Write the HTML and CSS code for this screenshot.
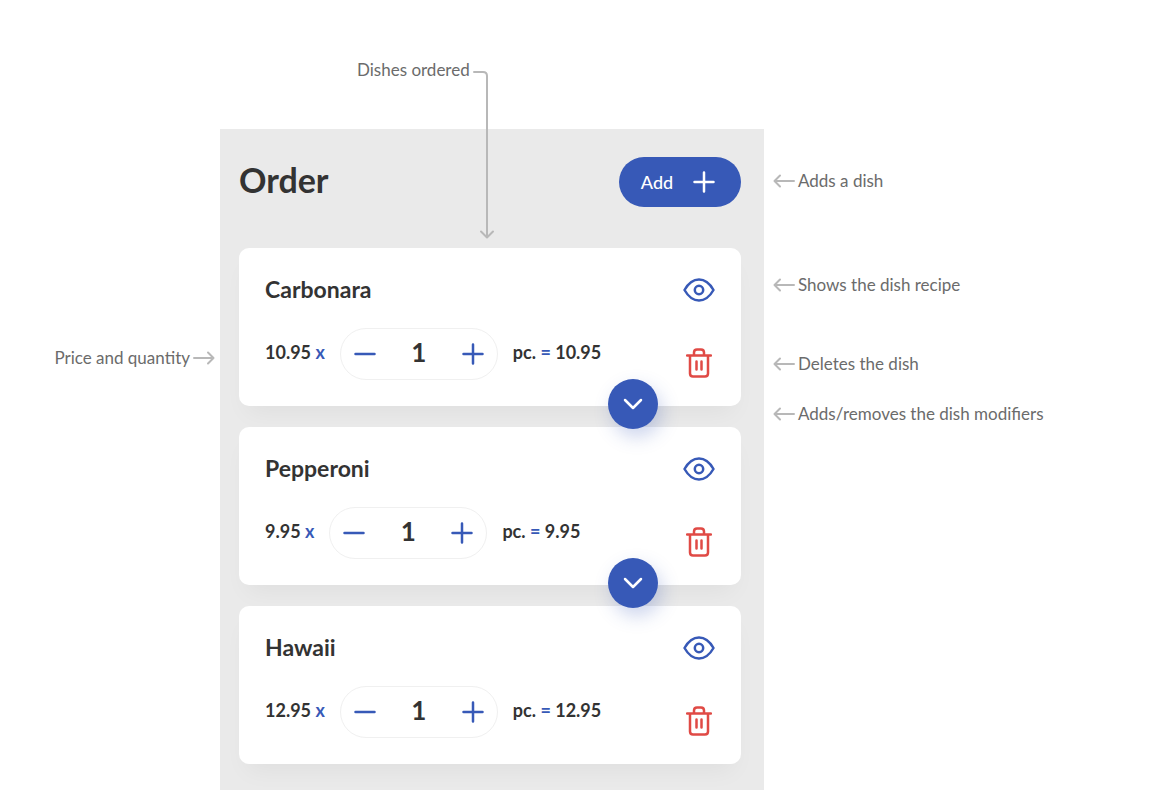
FILE: index.html
```html
<!DOCTYPE html>
<html lang="en">
<head>
  <meta charset="UTF-8" />
  <meta name="viewport" content="width=device-width, initial-scale=1.0" />
  <title>Order</title>
  <link rel="stylesheet" href="styles.css">
</head>
<body>
  <!-- Shared icons -->
  <svg class="sprite" aria-hidden="true">
    <symbol id="arrow-left" viewBox="0 0 22 14">
      <path d="M21 7H1.5M7 1.5L1.5 7L7 12.5" />
    </symbol>
    <symbol id="arrow-right" viewBox="0 0 22 14">
      <path d="M1 7h19.5M15 1.5L20.5 7L15 12.5" />
    </symbol>
    <symbol id="plus" viewBox="0 0 22 22">
      <path d="M1.5 11h19M11 1.5v19" />
    </symbol>
    <symbol id="minus" viewBox="0 0 22 22">
      <path d="M1.5 11h19" />
    </symbol>
    <symbol id="chevron" viewBox="0 0 20 12">
      <path d="M2 2l8 8l8-8" />
    </symbol>
    <symbol id="eye" viewBox="0 0 32 24">
      <path d="M1.5 12C5.5 5 10.5 1.5 16 1.5S26.5 5 30.5 12C26.5 19 21.5 22.5 16 22.5S5.5 19 1.5 12Z" />
      <circle cx="16" cy="12" r="4.2" />
    </symbol>
    <symbol id="trash" viewBox="0 0 26 30">
      <path d="M1 7.5h24M4 7.5V25.5Q4 28.5 7 28.5H19Q22 28.5 22 25.5V7.5M8 7V4.5Q8 1.5 11 1.5H15Q18 1.5 18 4.5V7M10.5 13.5v8M15.5 13.5v8" />
    </symbol>
  </svg>

  <main class="guide">
    <p class="note note-top">
      <span class="note-label">Dishes ordered
        <svg class="connector" viewBox="0 0 22 172" aria-hidden="true">
          <path d="M1 4h9q4 0 4 4v161M8 163.5l6 6l6-6" />
        </svg>
      </span>
    </p>

    <p class="note note-left">
      Price and quantity
      <svg class="arrow" aria-hidden="true"><use href="#arrow-right" /></svg>
    </p>

    <section class="order">
      <header class="order-header">
        <h1>Order</h1>
        <button class="add" type="button">Add <svg class="icon-plus" aria-hidden="true"><use href="#plus" /></svg></button>
      </header>

      <article class="dish">
        <div class="dish-main">
          <h2>Carbonara</h2>
          <div class="dish-price">
            <span class="amount">10.95 <span class="sign">x</span></span>
            <div class="quantity">
              <button type="button" aria-label="Less"><svg class="icon-plus"><use href="#minus" /></svg></button>
              <input type="text" value="1" aria-label="Carbonara quantity" />
              <button type="button" aria-label="More"><svg class="icon-plus"><use href="#plus" /></svg></button>
            </div>
            <span class="amount">pc. <span class="sign">=</span> 10.95</span>
          </div>
        </div>
        <div class="dish-actions">
          <button class="show" type="button" aria-label="Show recipe"><svg class="icon-eye"><use href="#eye" /></svg></button>
          <button class="delete" type="button" aria-label="Delete"><svg class="icon-trash"><use href="#trash" /></svg></button>
        </div>
        <button class="expand" type="button" aria-label="Modifiers"><svg class="icon-chevron"><use href="#chevron" /></svg></button>
      </article>

      <article class="dish">
        <div class="dish-main">
          <h2>Pepperoni</h2>
          <div class="dish-price">
            <span class="amount">9.95 <span class="sign">x</span></span>
            <div class="quantity">
              <button type="button" aria-label="Less"><svg class="icon-plus"><use href="#minus" /></svg></button>
              <input type="text" value="1" aria-label="Pepperoni quantity" />
              <button type="button" aria-label="More"><svg class="icon-plus"><use href="#plus" /></svg></button>
            </div>
            <span class="amount">pc. <span class="sign">=</span> 9.95</span>
          </div>
        </div>
        <div class="dish-actions">
          <button class="show" type="button" aria-label="Show recipe"><svg class="icon-eye"><use href="#eye" /></svg></button>
          <button class="delete" type="button" aria-label="Delete"><svg class="icon-trash"><use href="#trash" /></svg></button>
        </div>
        <button class="expand" type="button" aria-label="Modifiers"><svg class="icon-chevron"><use href="#chevron" /></svg></button>
      </article>

      <article class="dish">
        <div class="dish-main">
          <h2>Hawaii</h2>
          <div class="dish-price">
            <span class="amount">12.95 <span class="sign">x</span></span>
            <div class="quantity">
              <button type="button" aria-label="Less"><svg class="icon-plus"><use href="#minus" /></svg></button>
              <input type="text" value="1" aria-label="Hawaii quantity" />
              <button type="button" aria-label="More"><svg class="icon-plus"><use href="#plus" /></svg></button>
            </div>
            <span class="amount">pc. <span class="sign">=</span> 12.95</span>
          </div>
        </div>
        <div class="dish-actions">
          <button class="show" type="button" aria-label="Show recipe"><svg class="icon-eye"><use href="#eye" /></svg></button>
          <button class="delete" type="button" aria-label="Delete"><svg class="icon-trash"><use href="#trash" /></svg></button>
        </div>
      </article>
    </section>

    <ul class="notes-right">
      <li class="note"><svg class="arrow" aria-hidden="true"><use href="#arrow-left" /></svg>Adds a dish</li>
      <li class="note"><svg class="arrow" aria-hidden="true"><use href="#arrow-left" /></svg>Shows the dish recipe</li>
      <li class="note"><svg class="arrow" aria-hidden="true"><use href="#arrow-left" /></svg>Deletes the dish</li>
      <li class="note"><svg class="arrow" aria-hidden="true"><use href="#arrow-left" /></svg>Adds/removes the dish modifiers</li>
    </ul>
  </main>
</body>
</html>
```

FILE: styles.css
```css
* {
  box-sizing: border-box;
}
body {
  margin: 0;
  background: #fff;
  color: #333;
  font-family: Lato, sans-serif;
}
h1, h2, p, ul {
  margin: 0;
  padding: 0;
}
svg {
  display: block;
  flex: none;
  fill: none;
  stroke: currentColor;
  stroke-width: 2.5;
  stroke-linecap: round;
  stroke-linejoin: round;
}
button, input {
  padding: 0;
  border: none;
  background: none;
  font-family: inherit;
}
button {
  display: flex;
  align-items: center;
  justify-content: center;
  cursor: pointer;
}
.sprite {
  position: absolute;
  width: 0;
  height: 0;
}
.guide {
  display: grid;
  grid-template-columns: 220fr 544fr 412fr;
  grid-template-rows: 129px auto;
}

/* Notes */
.note {
  display: flex;
  align-items: center;
  gap: 3px;
  height: 24px;
  color: #6b6b6b;
  font-size: 17px;
  line-height: 24px;
  white-space: nowrap;
}
.arrow {
  width: 22px;
  height: 14px;
  color: #b8b8b8;
  stroke-width: 2;
}
.note-top {
  grid-column: 2;
  grid-row: 1;
  margin: 58px 0 0 137px;
}
.note-label {
  position: relative;
}
.connector {
  position: absolute;
  top: 10px;
  left: 100%;
  z-index: 2;
  width: 22px;
  height: 172px;
  margin-left: 3px;
  color: #b8b8b8;
  stroke-width: 2;
}
.note-left {
  grid-column: 1;
  grid-row: 2;
  justify-content: flex-end;
  margin: 217px 5px 0 0;
}
.notes-right {
  display: grid;
  grid-column: 3;
  grid-row: 2;
  grid-template-rows: 104px 79px 50px 24px;
  align-content: start;
  padding: 40px 0 0 9px;
  list-style: none;
}

/* Order panel */
.order {
  display: flex;
  grid-column: 2;
  grid-row: 2;
  flex-direction: column;
  gap: 21px;
  padding: 28px 23px 26px 19px;
  background: #eaeaea;
}
.order-header {
  display: flex;
  align-items: flex-start;
  justify-content: space-between;
  height: 70px;
}
h1 {
  font-size: 34px;
  font-weight: 700;
  line-height: 46px;
}
.add {
  gap: 20px;
  width: 122px;
  height: 50px;
  padding-right: 4px;
  border-radius: 25px;
  background: #3759b7;
  color: #fff;
  font-size: 18px;
  font-weight: 500;
}
.icon-plus {
  width: 22px;
  height: 22px;
}
.dish {
  position: relative;
  display: flex;
  justify-content: space-between;
  padding: 25px 26px 26px;
  border-radius: 10px;
  background: #fff;
  box-shadow: 0 14px 24px -8px rgba(0, 0, 0, 0.05);
}
h2 {
  margin-bottom: 23px;
  font-size: 23px;
  font-weight: 700;
  line-height: 32px;
}
.dish-price {
  display: flex;
  align-items: center;
  gap: 15px;
  font-size: 18px;
  font-weight: 700;
  line-height: 24px;
  white-space: nowrap;
}
.amount {
  padding-bottom: 4px;
}
.sign {
  color: #3759b7;
}
.quantity {
  display: flex;
  width: 158px;
  height: 52px;
  border: 1px solid #f0f0f0;
  border-radius: 26px;
}
.quantity button {
  width: 48px;
  color: #3759b7;
}
.quantity input {
  flex: 1;
  min-width: 0;
  padding-bottom: 4px;
  color: #333;
  font-size: 26px;
  font-weight: 700;
  text-align: center;
}
.dish-actions {
  display: flex;
  flex-direction: column;
  align-items: center;
  gap: 46px;
  padding-top: 5px;
}
.show {
  color: #3759b7;
}
.delete {
  color: #e04a45;
}
.icon-eye {
  width: 32px;
  height: 24px;
}
.icon-trash {
  width: 26px;
  height: 30px;
}
.expand {
  position: absolute;
  right: 83px;
  bottom: -23px;
  z-index: 1;
  width: 50px;
  height: 50px;
  border-radius: 50%;
  background: #3759b7;
  color: #fff;
  box-shadow: 4px 8px 18px rgba(55, 89, 183, 0.25);
}
.icon-chevron {
  width: 20px;
  height: 12px;
}
```
